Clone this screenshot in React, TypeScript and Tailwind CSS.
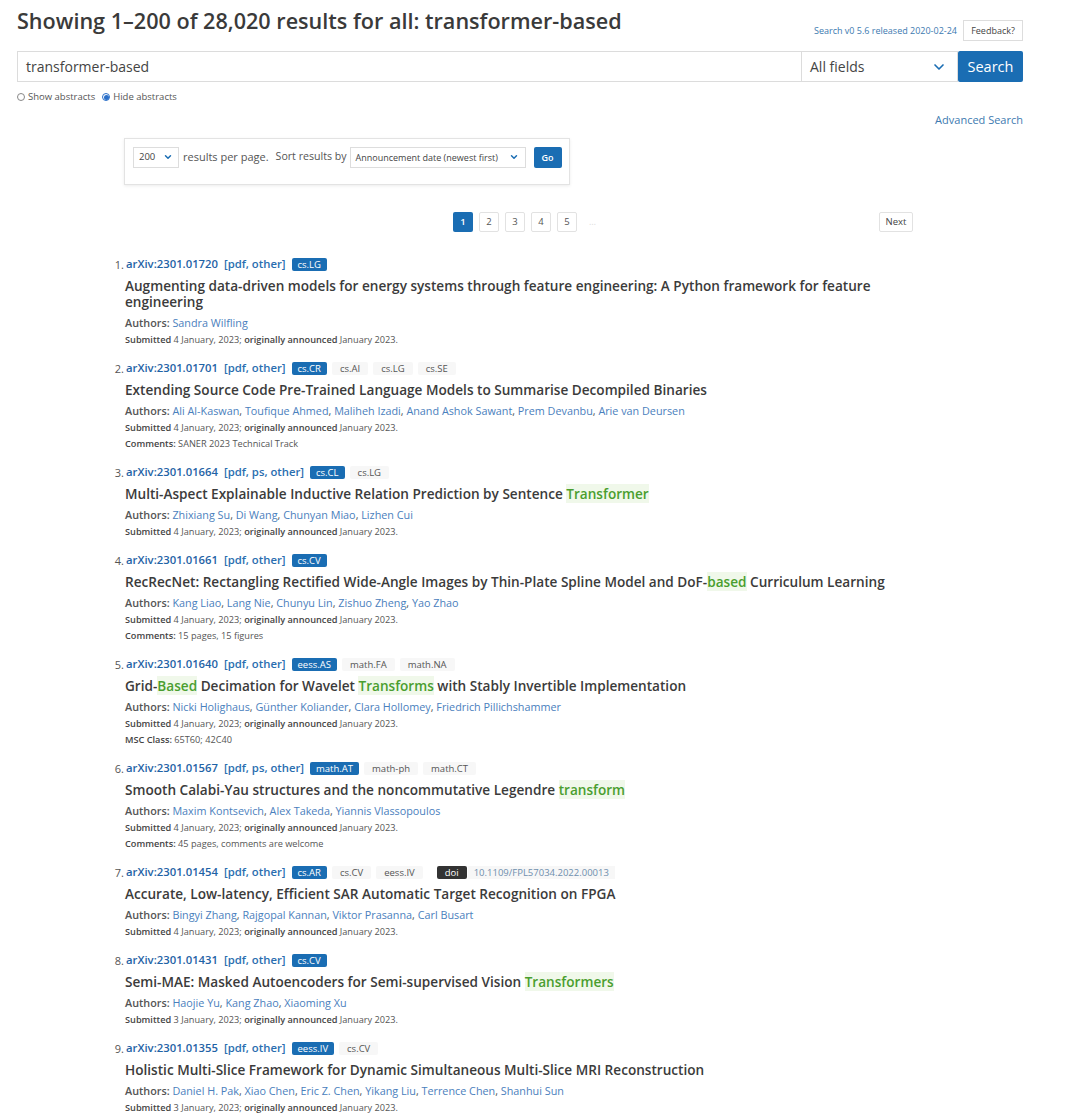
import { ChevronDown } from "lucide-react";

type Tag = { label: string; primary?: boolean };
type Part = string | { hl: string };

type Result = {
  id: string;
  links: string;
  tags: Tag[];
  doi?: string;
  title: Part[];
  authors: string[];
  submitted: string;
  extra?: { label: string; text: string };
};

const results: Result[] = [
  {
    id: "2301.01720",
    links: "[pdf, other]",
    tags: [{ label: "cs.LG", primary: true }],
    title: [
      "Augmenting data-driven models for energy systems through feature engineering: A Python framework for feature engineering",
    ],
    authors: ["Sandra Wilfling"],
    submitted: "4 January, 2023",
  },
  {
    id: "2301.01701",
    links: "[pdf, other]",
    tags: [
      { label: "cs.CR", primary: true },
      { label: "cs.AI" },
      { label: "cs.LG" },
      { label: "cs.SE" },
    ],
    title: [
      "Extending Source Code Pre-Trained Language Models to Summarise Decompiled Binaries",
    ],
    authors: [
      "Ali Al-Kaswan",
      "Toufique Ahmed",
      "Maliheh Izadi",
      "Anand Ashok Sawant",
      "Prem Devanbu",
      "Arie van Deursen",
    ],
    submitted: "4 January, 2023",
    extra: { label: "Comments:", text: "SANER 2023 Technical Track" },
  },
  {
    id: "2301.01664",
    links: "[pdf, ps, other]",
    tags: [{ label: "cs.CL", primary: true }, { label: "cs.LG" }],
    title: [
      "Multi-Aspect Explainable Inductive Relation Prediction by Sentence ",
      { hl: "Transformer" },
    ],
    authors: ["Zhixiang Su", "Di Wang", "Chunyan Miao", "Lizhen Cui"],
    submitted: "4 January, 2023",
  },
  {
    id: "2301.01661",
    links: "[pdf, other]",
    tags: [{ label: "cs.CV", primary: true }],
    title: [
      "RecRecNet: Rectangling Rectified Wide-Angle Images by Thin-Plate Spline Model and DoF-",
      { hl: "based" },
      " Curriculum Learning",
    ],
    authors: ["Kang Liao", "Lang Nie", "Chunyu Lin", "Zishuo Zheng", "Yao Zhao"],
    submitted: "4 January, 2023",
    extra: { label: "Comments:", text: "15 pages, 15 figures" },
  },
  {
    id: "2301.01640",
    links: "[pdf, other]",
    tags: [
      { label: "eess.AS", primary: true },
      { label: "math.FA" },
      { label: "math.NA" },
    ],
    title: [
      "Grid-",
      { hl: "Based" },
      " Decimation for Wavelet ",
      { hl: "Transforms" },
      " with Stably Invertible Implementation",
    ],
    authors: [
      "Nicki Holighaus",
      "Günther Koliander",
      "Clara Hollomey",
      "Friedrich Pillichshammer",
    ],
    submitted: "4 January, 2023",
    extra: { label: "MSC Class:", text: "65T60; 42C40" },
  },
  {
    id: "2301.01567",
    links: "[pdf, ps, other]",
    tags: [
      { label: "math.AT", primary: true },
      { label: "math-ph" },
      { label: "math.CT" },
    ],
    title: [
      "Smooth Calabi-Yau structures and the noncommutative Legendre ",
      { hl: "transform" },
    ],
    authors: ["Maxim Kontsevich", "Alex Takeda", "Yiannis Vlassopoulos"],
    submitted: "4 January, 2023",
    extra: { label: "Comments:", text: "45 pages, comments are welcome" },
  },
  {
    id: "2301.01454",
    links: "[pdf, other]",
    tags: [
      { label: "cs.AR", primary: true },
      { label: "cs.CV" },
      { label: "eess.IV" },
    ],
    doi: "10.1109/FPL57034.2022.00013",
    title: [
      "Accurate, Low-latency, Efficient SAR Automatic Target Recognition on FPGA",
    ],
    authors: ["Bingyi Zhang", "Rajgopal Kannan", "Viktor Prasanna", "Carl Busart"],
    submitted: "4 January, 2023",
  },
  {
    id: "2301.01431",
    links: "[pdf, other]",
    tags: [{ label: "cs.CV", primary: true }],
    title: [
      "Semi-MAE: Masked Autoencoders for Semi-supervised Vision ",
      { hl: "Transformers" },
    ],
    authors: ["Haojie Yu", "Kang Zhao", "Xiaoming Xu"],
    submitted: "3 January, 2023",
  },
  {
    id: "2301.01355",
    links: "[pdf, other]",
    tags: [{ label: "eess.IV", primary: true }, { label: "cs.CV" }],
    title: [
      "Holistic Multi-Slice Framework for Dynamic Simultaneous Multi-Slice MRI Reconstruction",
    ],
    authors: [
      "Daniel H. Pak",
      "Xiao Chen",
      "Eric Z. Chen",
      "Yikang Liu",
      "Terrence Chen",
      "Shanhui Sun",
    ],
    submitted: "3 January, 2023",
  },
];

function TagBadge({ tag }: { tag: Tag }) {
  if (tag.primary) {
    return (
      <span className="ml-[6px] inline-flex h-[13px] items-center rounded-[2px] bg-[#1a6db3] px-[6px] text-[9.5px] leading-none text-white">
        {tag.label}
      </span>
    );
  }
  return (
    <span className="ml-[5px] inline-flex h-[13px] items-center rounded-[2px] bg-[#f7f7f7] px-[8px] text-[9.5px] leading-none text-[#555]">
      {tag.label}
    </span>
  );
}

function ResultItem({ r, n }: { r: Result; n: number }) {
  return (
    <li className="flex">
      <span className="w-[11px] shrink-0 text-right text-[11px] leading-[20px] text-[#555]">
        {n}.
      </span>
      <div className="ml-[1px] w-[770px]">
        <div className="flex h-[20px] items-center text-[11.3px]">
          <span className="ml-[1px] font-semibold text-[#1f63a6]">arXiv:{r.id}</span>
          <span className="ml-[6px] font-semibold text-[#2a6eb0]">{r.links}</span>
          {r.tags.map((t) => (
            <TagBadge key={t.label} tag={t} />
          ))}
          {r.doi && (
            <>
              <span className="ml-[14px] inline-flex h-[13px] items-center rounded-[2px] bg-[#333] px-[8px] text-[9.5px] leading-none text-white">
                doi
              </span>
              <span className="ml-[1px] inline-flex h-[13px] items-center bg-[#f7f7f7] px-[6px] text-[9.5px] leading-none text-[#6f8fae]">
                {r.doi}
              </span>
            </>
          )}
        </div>
        <p className="mt-[3px] text-[13.6px] font-semibold leading-[16px] text-[#3b3b3b]">
          {r.title.map((p, i) =>
            typeof p === "string" ? (
              <span key={i}>{p}</span>
            ) : (
              <span key={i} className="bg-[#f0f8ea] text-[#4a9e2f]">
                {p.hl}
              </span>
            )
          )}
        </p>
        <p className="mt-[5px] text-[10.8px] leading-[16px]">
          <span className="font-semibold text-[#555]">Authors: </span>
          {r.authors.map((a, i) => (
            <span key={a}>
              <span className="text-[#4a80bd]">{a}</span>
              {i < r.authors.length - 1 && <span className="text-[#555]">, </span>}
            </span>
          ))}
        </p>
        <p className="mt-[1px] text-[9.2px] leading-[16px] text-[#555]">
          <span className="font-semibold text-[#444]">Submitted</span> {r.submitted};{" "}
          <span className="font-semibold text-[#444]">originally announced</span> January 2023.
        </p>
        {r.extra && (
          <p className="text-[9.2px] leading-[16px] text-[#555]">
            <span className="font-semibold text-[#444]">{r.extra.label}</span> {r.extra.text}
          </p>
        )}
      </div>
    </li>
  );
}

export default function App() {
  return (
    <div
      className="min-h-[1117px] w-[1080px] bg-white text-[#363636]"
      style={{ fontFamily: '"Open Sans", "Noto Sans", Arial, sans-serif' }}
    >
      <div className="px-[17px] pt-[4px]">
        {/* Header */}
        <div className="flex w-[1006px] items-start justify-between">
          <h1 className="text-[21.6px] font-semibold leading-[34px] text-[#3a3a3a]">
            Showing 1–200 of 28,020 results for all: transformer-based
          </h1>
          <div className="mt-[16px] flex items-center">
            <span className="text-[9px] text-[#3d7ab0]">Search v0 5.6 released 2020-02-24</span>
            <span className="ml-[6px] inline-flex h-[21px] w-[60px] items-center justify-center border border-[#ddd] text-[9px] text-[#444]">
              Feedback?
            </span>
          </div>
        </div>

        {/* Search bar */}
        <div className="mt-[10px] flex h-[31px] w-[1006px]">
          <div className="flex flex-1 items-center border border-[#dcdcdc] pl-[8px] text-[14px] text-[#444]">
            transformer-based
          </div>
          <div className="flex w-[156px] items-center justify-between border-y border-r border-[#dcdcdc] pl-[8px] pr-[10px] text-[14px] text-[#444]">
            All fields
            <ChevronDown className="h-[16px] w-[16px] text-[#1a6db3]" strokeWidth={2.5} />
          </div>
          <div className="flex w-[65px] items-center justify-center rounded-[2px] bg-[#1a6db3] text-[14.5px] text-white">
            Search
          </div>
        </div>

        {/* Abstract toggles */}
        <div className="mt-[8px] flex items-center text-[9.5px] text-[#555]">
          <span className="h-[8px] w-[8px] rounded-full border border-[#888]" />
          <span className="ml-[3px]">Show abstracts</span>
          <span className="ml-[7px] flex h-[8px] w-[8px] items-center justify-center rounded-full border border-[#2a6fc9]">
            <span className="h-[5px] w-[5px] rounded-full bg-[#2a6fc9]" />
          </span>
          <span className="ml-[3px]">Hide abstracts</span>
        </div>

        <div className="mt-[8px] flex w-[1006px] justify-end text-[11px] text-[#3d7ab0]">
          Advanced Search
        </div>
      </div>

      {/* Results area */}
      <div className="ml-[113px] w-[800px]">
        {/* Sort box */}
        <div className="ml-[11px] mt-[9px] flex h-[47px] w-[446px] items-start border border-[#e3e3e3] pl-[8px] pt-[8px] shadow-[0_1px_3px_rgba(0,0,0,0.08)]">
          <div className="flex h-[21px] w-[46px] items-center justify-between border border-[#ddd] px-[5px] text-[9.5px] text-[#444]">
            200
            <ChevronDown className="h-[10px] w-[10px] text-[#1a6db3]" strokeWidth={3.5} />
          </div>
          <span className="ml-[4px] text-[11px] leading-[19px] text-[#555]">results per page.</span>
          <span className="ml-[7px] text-[10.6px] leading-[19px] text-[#555]">Sort results by</span>
          <div className="ml-[3px] flex h-[21px] w-[176px] items-center justify-between border border-[#ddd] pl-[5px] pr-[6px] text-[9px] text-[#444]">
            Announcement date (newest first)
            <ChevronDown className="h-[10px] w-[10px] text-[#1a6db3]" strokeWidth={3.5} />
          </div>
          <div className="ml-[8px] flex h-[21px] w-[28px] items-center justify-center rounded-[2px] bg-[#1a6db3] text-[9px] font-semibold text-white">
            Go
          </div>
        </div>

        {/* Pagination */}
        <div className="mt-[27px] flex items-center justify-between pl-[340px]">
          <div className="flex items-center gap-[6px]">
            <span className="flex h-[20px] w-[20px] items-center justify-center rounded-[2px] bg-[#1a6db3] text-[9.5px] font-semibold text-white">
              1
            </span>
            {["2", "3", "4", "5"].map((p) => (
              <span
                key={p}
                className="flex h-[20px] w-[20px] items-center justify-center rounded-[2px] border border-[#e2e2e2] text-[9.5px] text-[#555]"
              >
                {p}
              </span>
            ))}
            <span className="ml-[6px] text-[9px] text-[#ddd]">…</span>
          </div>
          <span className="flex h-[20px] w-[34px] items-center justify-center rounded-[2px] border border-[#e2e2e2] text-[9.5px] text-[#444]">
            Next
          </span>
        </div>

        {/* Results */}
        <ol className="mt-[23px] flex flex-col gap-[11px]">
          {results.map((r, i) => (
            <ResultItem key={r.id} r={r} n={i + 1} />
          ))}
        </ol>
      </div>
    </div>
  );
}
